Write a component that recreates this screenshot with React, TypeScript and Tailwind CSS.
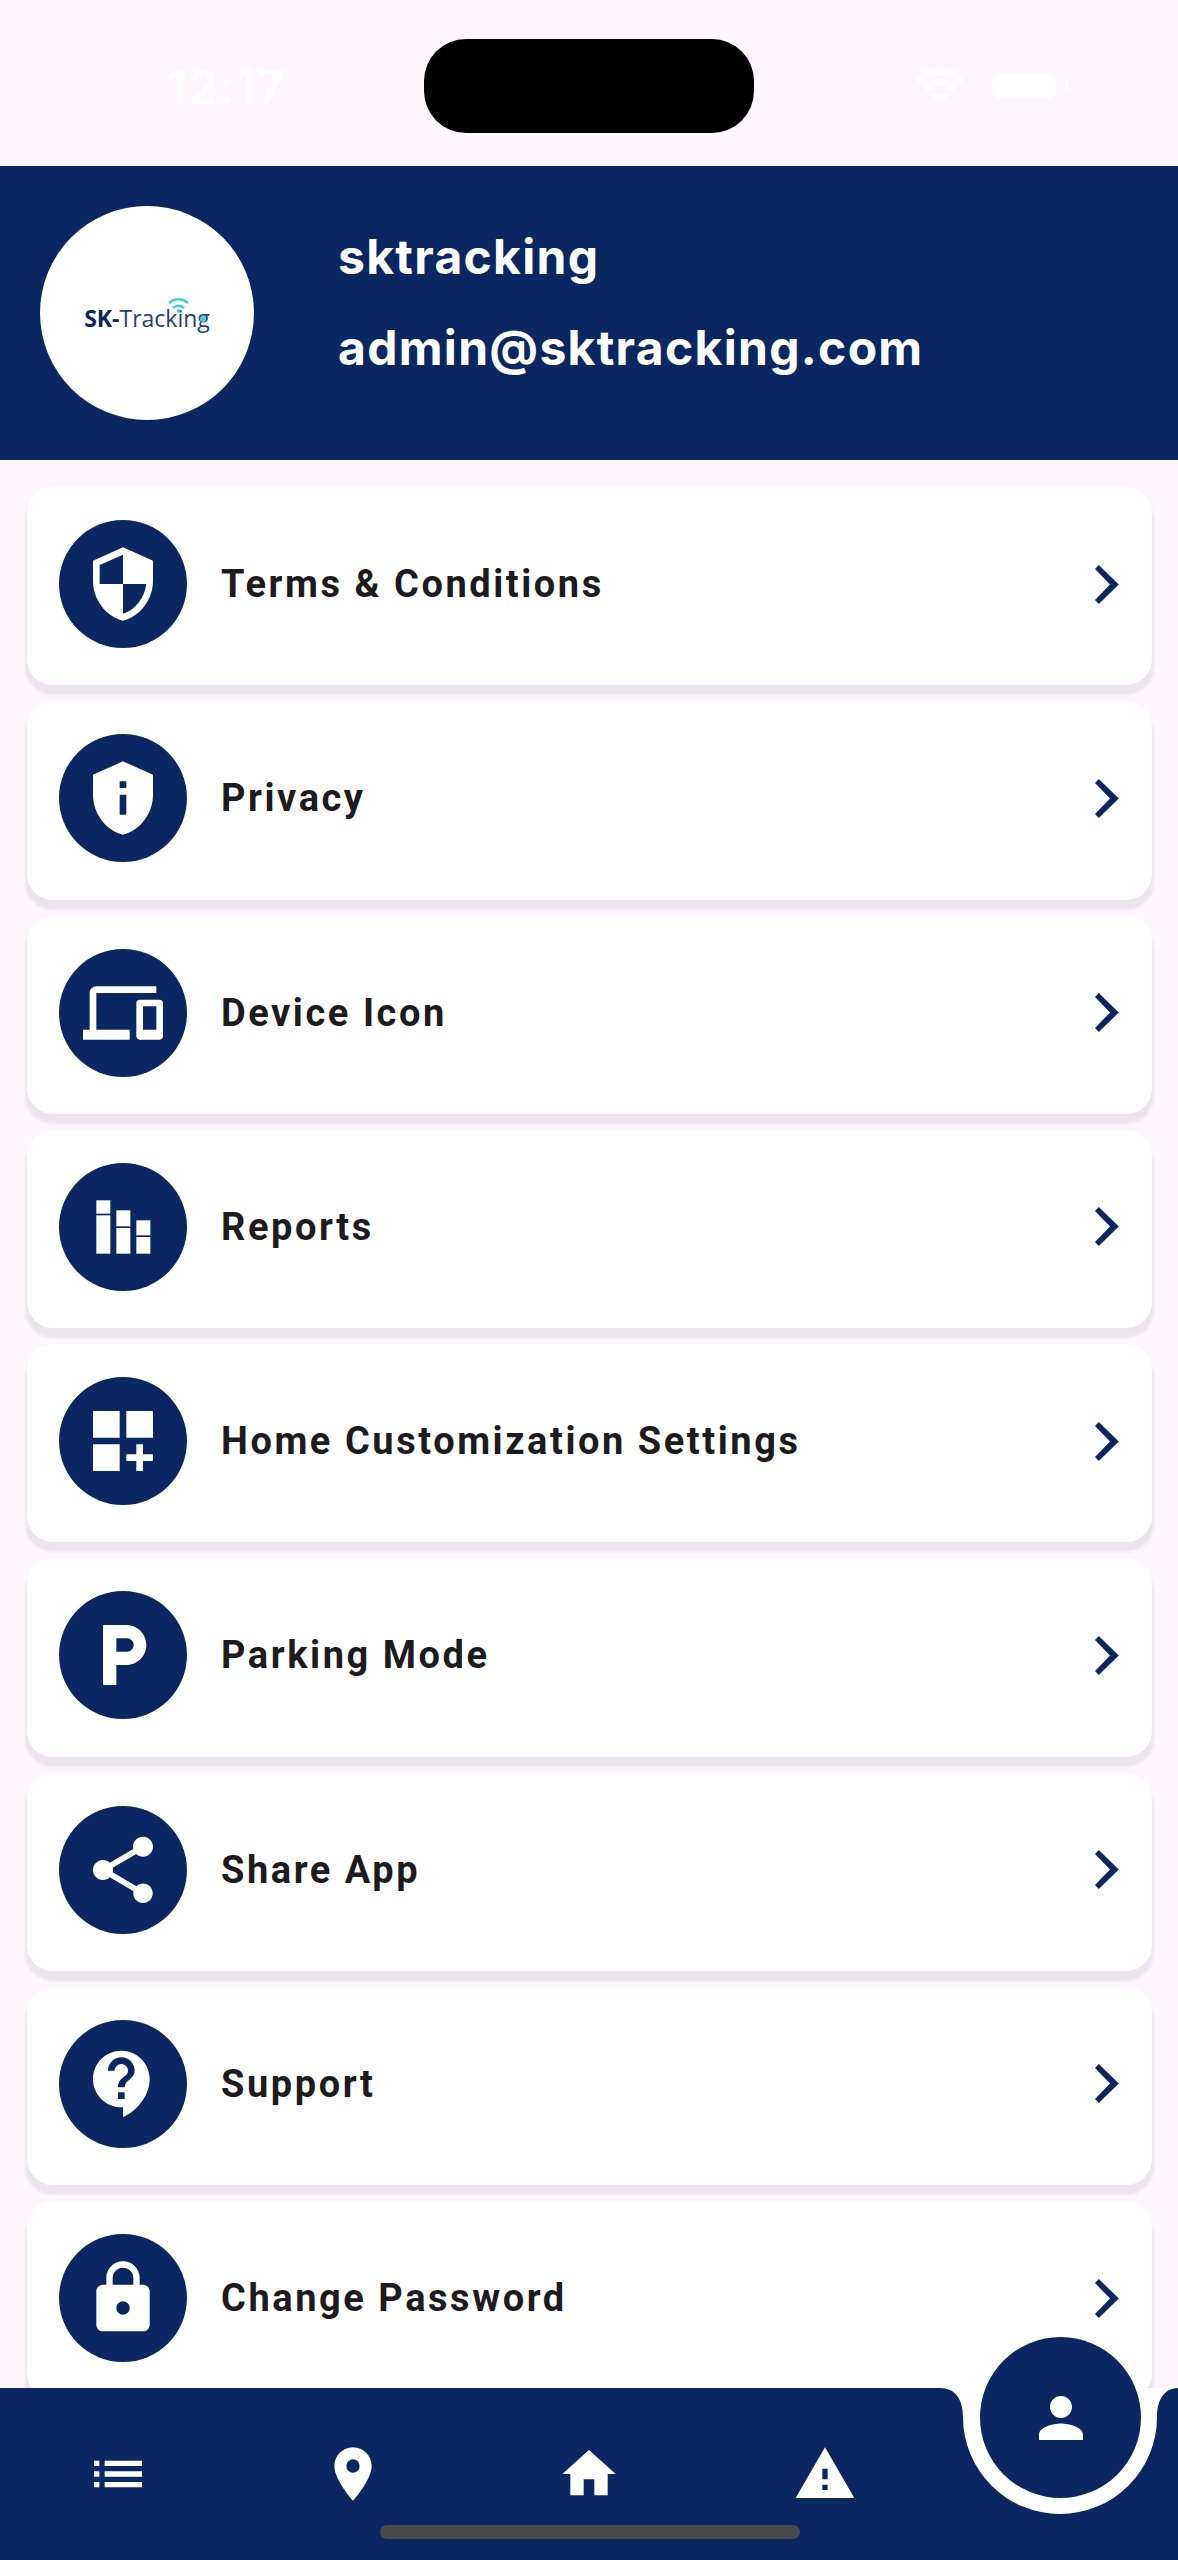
import type { ReactNode } from "react"
import {
  MdContactSupport,
  MdDashboardCustomize,
  MdDevices,
  MdHome,
  MdList,
  MdLocalParking,
  MdLocationOn,
  MdLock,
  MdPerson,
  MdPrivacyTip,
  MdSecurity,
  MdShare,
  MdWarning,
} from "react-icons/md"

function ReportsIcon() {
  return (
    <svg width="80" height="80" viewBox="0 0 24 24" fill="#fff">
      <rect x="4" y="4" width="4.2" height="4" />
      <rect x="4" y="8.5" width="4.2" height="11.5" />
      <rect x="10" y="7" width="4.2" height="4.8" />
      <rect x="10" y="12.3" width="4.2" height="7.7" />
      <rect x="16" y="10" width="4.2" height="4.5" />
      <rect x="16" y="15" width="4.2" height="5" />
    </svg>
  )
}

function Chevron() {
  return (
    <svg className="shrink-0" width="24" height="39" viewBox="0 0 24 39" fill="#0a2761">
      <polygon points="3.8,0 23.8,19.5 3.8,39 0,35 15,19.5 0,4" />
    </svg>
  )
}

const menuItems: { label: string; icon: ReactNode }[] = [
  { label: "Terms & Conditions", icon: <MdSecurity size={80} color="#fff" /> },
  { label: "Privacy", icon: <MdPrivacyTip size={80} color="#fff" /> },
  { label: "Device Icon", icon: <MdDevices size={80} color="#fff" /> },
  { label: "Reports", icon: <ReportsIcon /> },
  { label: "Home Customization Settings", icon: <MdDashboardCustomize size={80} color="#fff" /> },
  { label: "Parking Mode", icon: <MdLocalParking size={80} color="#fff" /> },
  { label: "Share App", icon: <MdShare size={80} color="#fff" /> },
  { label: "Support", icon: <MdContactSupport size={80} color="#fff" /> },
  { label: "Change Password", icon: <MdLock size={80} color="#fff" /> },
]

function StatusBar() {
  return (
    <div className="grid h-[166px] shrink-0 grid-cols-[424px_330px_1fr] items-start">
      <div className="pl-[167px] pt-[60px] font-['Inter',sans-serif] text-[46px] leading-[54px] font-semibold tracking-[2px] text-white">
        12:17
      </div>
      <div className="mt-[39px] h-[94px] w-[330px] rounded-[42px] bg-black" />
      <div className="flex items-center gap-[26px] pl-[160px] pt-[67px]">
        <svg width="52" height="38" viewBox="0 0 52 38" fill="none" stroke="#fff" strokeWidth="7">
          <path d="M3 14 C16 1 36 1 49 14" />
          <path d="M11 22 C20 13 32 13 41 22" />
          <path d="M26 37 L18 29 C23 25 29 25 34 29 Z" fill="#fff" stroke="none" />
        </svg>
        <div className="flex items-center gap-[9px]">
          <div className="h-[26px] w-[64px] rounded-[9px] bg-white" />
          <div className="h-[10px] w-[4px] rounded-r-full bg-white" />
        </div>
      </div>
    </div>
  )
}

function Logo() {
  return (
    <div className="relative mt-[10px] whitespace-nowrap font-['Open_Sans',sans-serif] text-[23px] leading-[28px] text-[#24417a]">
      <span className="font-bold text-[#0a2761]">SK-</span>Tracking
      <svg className="absolute left-[83px] top-[-6px]" width="24" height="24" viewBox="0 0 24 24" fill="none" stroke="#3fd0cf" strokeWidth="2.4">
        <path d="M2 5 C8 0 15 0 21 5" />
        <path d="M6 10 C9 7 14 7 17 10" />
        <circle cx="11.5" cy="13" r="1.8" fill="#3fd0cf" stroke="none" />
      </svg>
      <span className="absolute left-[116px] top-[12px] h-[6px] w-[6px] rounded-full bg-[#3fd0cf]" />
    </div>
  )
}

function ProfileHeader() {
  return (
    <div className="flex h-[294px] shrink-0 items-center gap-[84px] bg-[#0a2761] pl-[40px]">
      <div className="flex h-[214px] w-[214px] shrink-0 items-center justify-center rounded-full bg-white">
        <Logo />
      </div>
      <div className="flex flex-col gap-[34px] pb-[23px] font-['Inter',sans-serif] text-[48px] leading-[57px] font-bold tracking-[1.3px] text-white">
        <div>sktracking</div>
        <div>admin@sktracking.com</div>
      </div>
    </div>
  )
}

function MenuRow({ label, icon }: { label: string; icon: ReactNode }) {
  return (
    <div className="flex h-[198.25px] shrink-0 items-center gap-[34px] rounded-[26px] bg-white pb-[4px] pl-[32px] pr-[33px] shadow-[0_8px_3px_2px_rgba(30,20,40,0.08)]">
      <div className="flex h-[128px] w-[128px] shrink-0 items-center justify-center rounded-full bg-[#0a2761]">
        {icon}
      </div>
      <div className="flex-1 text-[38px] leading-[44px] font-bold tracking-[2.55px] text-[#1d1b20]">
        {label}
      </div>
      <Chevron />
    </div>
  )
}

function BottomNav() {
  return (
    <div className="relative z-10 h-[172px] shrink-0 bg-[#0a2761]">
      <svg className="absolute right-0 top-0" width="238" height="127" viewBox="0 0 238 127" fill="#fff">
        <path d="M0 0 C15 0 23 11 23 29 A97 97 0 0 0 217 29 C217 11 225 0 238 0 Z" />
      </svg>
      <div className="grid grid-cols-5 justify-items-center pt-[54px]">
        <MdList size={64} color="#fff" />
        <MdLocationOn size={64} color="#fff" />
        <MdHome size={64} color="#fff" />
        <MdWarning size={64} color="#fff" />
      </div>
      <div className="absolute left-[980px] top-[-51px] flex h-[161px] w-[161px] items-center justify-center rounded-full bg-[#0a2761]">
        <MdPerson size={66} color="#fff" />
      </div>
      <div className="absolute bottom-[21px] left-[380px] h-[14px] w-[420px] rounded-full bg-[#4a4a4a]" />
    </div>
  )
}

export default function App() {
  return (
    <div className="flex h-[2560px] w-[1178px] flex-col overflow-hidden bg-[#fef7ff] font-['Roboto',sans-serif]">
      <StatusBar />
      <ProfileHeader />
      <div className="flex min-h-0 flex-1 flex-col gap-4 overflow-hidden pb-0 pl-[27px] pr-[26px] pt-[27px]">
        {menuItems.map((item) => (
          <MenuRow key={item.label} label={item.label} icon={item.icon} />
        ))}
      </div>
      <BottomNav />
    </div>
  )
}
